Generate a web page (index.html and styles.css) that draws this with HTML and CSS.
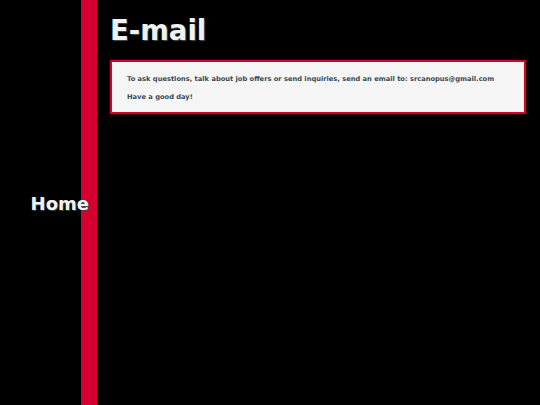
FILE: index.html
```html
<!DOCTYPE html>
<html lang="en">
<head>
<meta charset="utf-8">
<title>E-mail</title>
<link rel="stylesheet" href="styles.css">
</head>
<body>
<div class="page">
  <nav class="sidebar">
    <a class="nav-link" href="#">Home</a>
  </nav>
  <main class="content">
    <h1 class="title">E-mail</h1>
    <section class="card">
      <p class="card-text">To ask questions, talk about job offers or send inquiries, send an email to: srcanopus@gmail.com</p>
      <p class="card-text">Have a good day!</p>
    </section>
  </main>
</div>
</body>
</html>
```
FILE: styles.css
```css
html, body {
  margin: 0;
  padding: 0;
  background: #000;
}
body {
  font-family: "DejaVu Sans", Verdana, sans-serif;
}
.page {
  display: flex;
  height: 405px;
}
.sidebar {
  width: 81px;
  flex: 0 0 81px;
  border-right: 16px solid #d6002f;
  display: flex;
  align-items: center;
  justify-content: flex-end;
  padding-top: 2px;
  box-sizing: content-box;
}
.nav-link {
  font-size: 18px;
  font-weight: bold;
  color: #f2f2f2;
  text-decoration: none;
  margin-right: -8px;
  text-shadow: 1px 1px 1px #444;
  position: relative;
}
.content {
  flex: 1;
  padding: 15px 14px 0 13px;
  display: flex;
  flex-direction: column;
}
.title {
  margin: 0;
  font-size: 27.5px;
  font-weight: bold;
  line-height: 31px;
  color: #eef2f2;
  text-shadow: 1px 1px 1px #4a4a4a;
}
.card {
  margin-top: 14px;
  border: 2px solid #d6002f;
  background: #f5f5f5;
  padding: 13px 15px 10px 15px;
  display: flex;
  flex-direction: column;
  gap: 9px;
  box-shadow: 0 0 2px #6a0018;
}
.card-text {
  margin: 0;
  font-size: 6.7px;
  line-height: 9px;
  font-weight: bold;
  color: #3a4a52;
}
```
